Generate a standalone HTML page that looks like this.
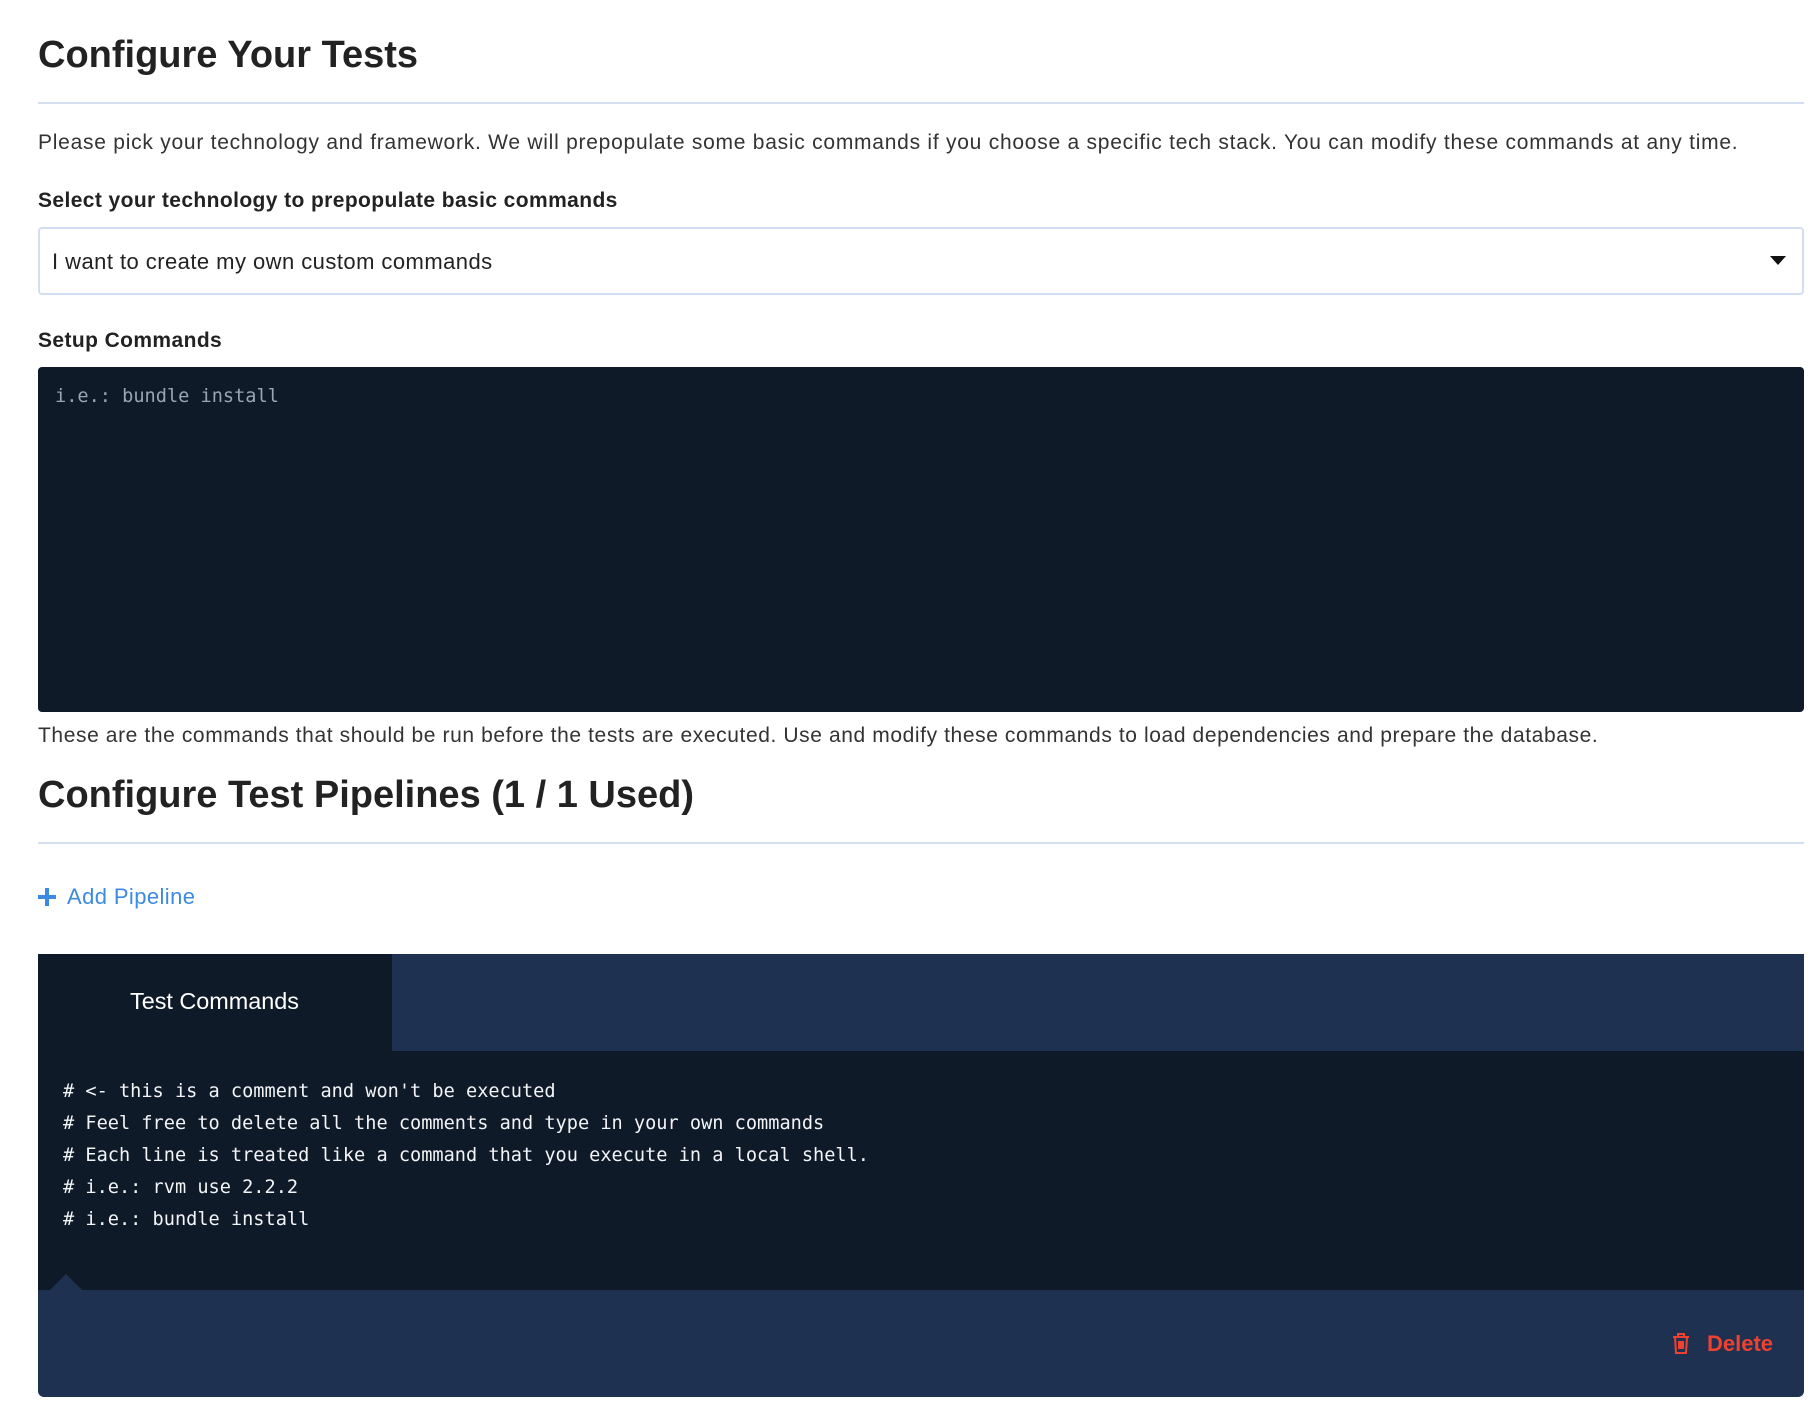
<!DOCTYPE html>
<html><head><meta charset="utf-8"><style>
body{margin:0;background:#fff;font-family:"Liberation Sans",sans-serif;color:#222;width:1820px;height:1404px;overflow:hidden;position:relative}
.a{position:absolute}
h1,h2{margin:0;font-weight:bold;font-size:38px;color:#222}
.hr{position:absolute;left:38px;width:1766px;height:2px;background:#d3dff0}
.p{font-size:21px;color:#333}
.lbl{font-size:21px;font-weight:bold;letter-spacing:0.4px}
.mono{font-family:"DejaVu Sans Mono","Liberation Mono",monospace;font-size:18.6px}
</style></head><body>
<h1 class="a" style="left:38px;top:34px">Configure Your Tests</h1>
<div class="hr" style="top:102px"></div>
<div class="a p" style="left:38px;top:131px;letter-spacing:0.75px">Please pick your technology and framework. We will prepopulate some basic commands if you choose a specific tech stack. You can modify these commands at any time.</div>
<div class="a lbl" style="left:38px;top:189px">Select your technology to prepopulate basic commands</div>
<div class="a" style="left:38px;top:227px;width:1762px;height:64px;border:2px solid #d3dff0;border-radius:4px"></div>
<div class="a" style="left:52px;top:249px;font-size:22px;letter-spacing:0.45px;color:#222">I want to create my own custom commands</div>
<div class="a" style="left:1770px;top:256px;width:0;height:0;border-left:8px solid transparent;border-right:8px solid transparent;border-top:9px solid #111"></div>
<div class="a lbl" style="left:38px;top:329px">Setup Commands</div>
<div class="a" style="left:38px;top:367px;width:1766px;height:345px;background:#0f1a29;border-radius:4px"></div>
<div class="a mono" style="left:55px;top:386px;color:#9aa5b4">i.e.: bundle install</div>
<div class="a p" style="left:38px;top:724px;letter-spacing:0.6px">These are the commands that should be run before the tests are executed. Use and modify these commands to load dependencies and prepare the database.</div>
<h2 class="a" style="left:38px;top:774px">Configure Test Pipelines (1 / 1 Used)</h2>
<div class="hr" style="top:842px"></div>
<div class="a" style="left:38px;top:895px;width:18px;height:4px;background:#3d8be0"></div>
<div class="a" style="left:45px;top:888px;width:4px;height:18px;background:#3d8be0"></div>
<div class="a" style="left:67px;top:884px;font-size:22px;letter-spacing:0.4px;color:#3d8be0">Add Pipeline</div>
<div class="a" style="left:38px;top:954px;width:1766px;height:443px;background:#1e3150;border-radius:0 0 6px 6px"></div>
<div class="a" style="left:38px;top:954px;width:354px;height:98px;background:#0f1a29"></div>
<div class="a" style="left:130px;top:988px;font-size:23.4px;color:#fff">Test Commands</div>
<div class="a" style="left:38px;top:1051px;width:1766px;height:239px;background:#0f1a29"></div>
<div class="a" style="left:50px;top:1274px;width:0;height:0;border-left:16px solid transparent;border-right:16px solid transparent;border-bottom:16px solid #1e3150"></div>
<div class="a mono" style="left:63px;top:1076px;color:#f2f4f7;line-height:32px;white-space:pre"># &lt;- this is a comment and won't be executed
# Feel free to delete all the comments and type in your own commands
# Each line is treated like a command that you execute in a local shell.
# i.e.: rvm use 2.2.2
# i.e.: bundle install</div>
<svg class="a" style="left:1672px;top:1333px" width="18" height="21" viewBox="0 0 18 21" fill="none" stroke="#f0402f" stroke-width="2"><path d="M1 4h16M6 4V1h6v3M3 4l1 16h10l1-16M7 8v8M9 8v8M11 8v8"/></svg>
<div class="a" style="left:1707px;top:1331px;font-size:22px;font-weight:bold;color:#f0402f">Delete</div>
</body></html>
